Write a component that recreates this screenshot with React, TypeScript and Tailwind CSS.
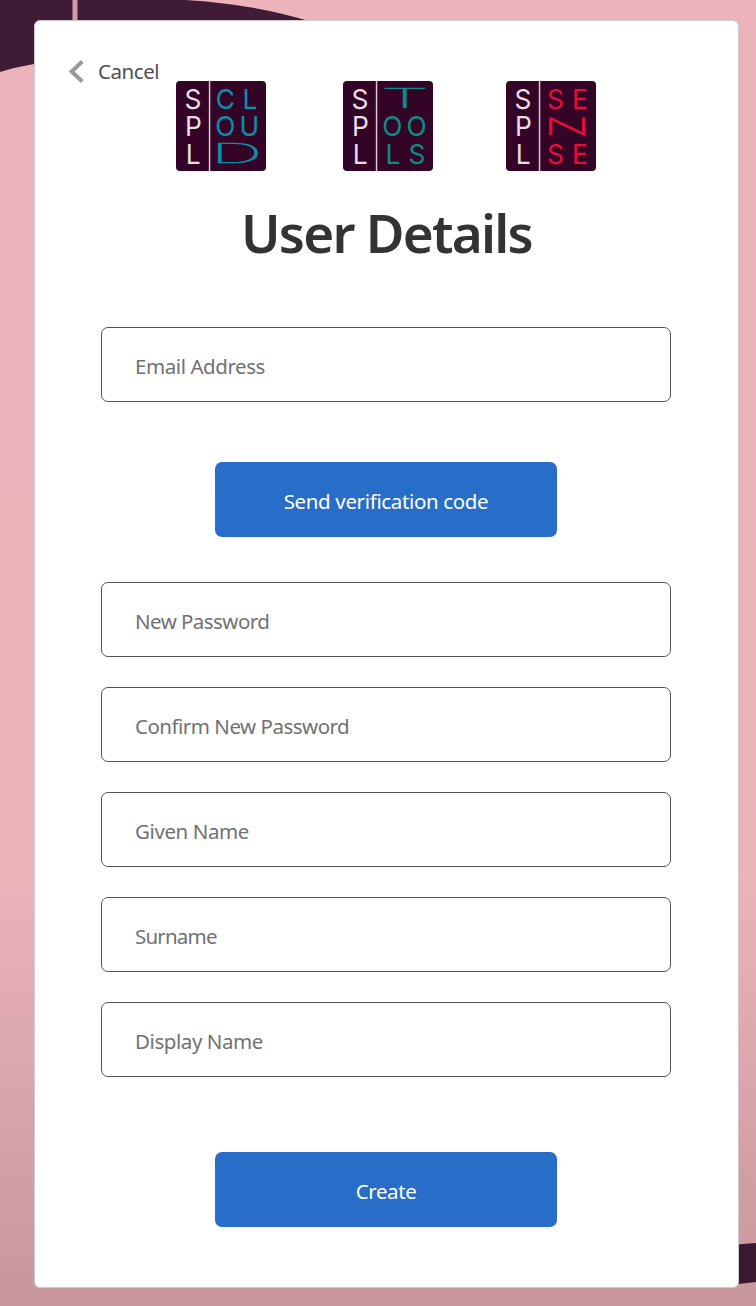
import React from "react";

type Letter = { ch: string; cx: number; y: number; sx?: number; size?: number; wide?: boolean; turned?: boolean };

const SPL: Letter[] = [
  { ch: "S", cx: 17, y: 28.3 },
  { ch: "P", cx: 17.5, y: 55 },
  { ch: "L", cx: 17.3, y: 82.5 },
];

function Letters({ items, fill }: { items: Letter[]; fill: string }) {
  return (
    <g fill={fill} fontFamily="Inter, sans-serif" fontSize="27.5" textAnchor="middle">
      {items.map((l, i) => (
        <text
          key={i}
          transform={`translate(${l.cx} ${l.y}) rotate(${l.turned ? 90 : 0}) scale(${l.sx ?? 0.96} 1)`}
          fontSize={l.size}
          fontWeight={l.wide ? 100 : l.turned ? 300 : 400}
          stroke={l.wide ? fill : undefined}
          strokeWidth={l.wide ? 1.5 : undefined}
          vectorEffect={l.wide ? "non-scaling-stroke" : undefined}
        >
          {l.ch}
        </text>
      ))}
    </g>
  );
}

function Logo({ items, color, label }: { items: Letter[]; color: string; label: string }) {
  return (
    <svg className="h-[90px] w-[90px]" viewBox="0 0 90 90" role="img" aria-label={label}>
      <rect width="90" height="90" rx="4" fill="#330425" />
      <rect x="32.8" width="1.5" height="90" fill="#d8c8d3" />
      <Letters items={SPL} fill="#e9dde6" />
      <Letters items={items} fill={color} />
    </svg>
  );
}

const cloud: Letter[] = [
  { ch: "C", cx: 49.3, y: 28.3 },
  { ch: "L", cx: 74, y: 28.3 },
  { ch: "O", cx: 49.3, y: 55 },
  { ch: "U", cx: 73.2, y: 55 },
  { ch: "D", cx: 60.5, y: 82, sx: 2.7, size: 26.5, wide: true },
];
const tools: Letter[] = [
  { ch: "T", cx: 61.8, y: 27, sx: 2.95, size: 26.5, wide: true },
  { ch: "O", cx: 49.3, y: 55 },
  { ch: "O", cx: 73.7, y: 55 },
  { ch: "L", cx: 50, y: 82.5 },
  { ch: "S", cx: 74, y: 82.5 },
];
const sense: Letter[] = [
  { ch: "S", cx: 49.5, y: 28.3 },
  { ch: "E", cx: 74, y: 28.3 },
  { ch: "Z", cx: 43.3, y: 45.2, sx: 0.74, size: 49, turned: true },
  { ch: "S", cx: 49.5, y: 82.5 },
  { ch: "E", cx: 74, y: 82.5 },
];

function Backdrop() {
  return (
    <svg className="absolute inset-0 h-full w-full" viewBox="0 0 756 1306" aria-hidden="true">
      <defs>
        <linearGradient id="rose" x1="0" y1="0" x2="0" y2="1">
          <stop offset="0" stopColor="#ecb3bb" />
          <stop offset="0.67" stopColor="#ecb3b9" />
          <stop offset="0.82" stopColor="#dba6ad" />
          <stop offset="1" stopColor="#c7969b" />
        </linearGradient>
      </defs>
      <rect width="756" height="1306" fill="url(#rose)" />
      <path d="M0 0H185Q255 4 312 22L34 64Q16 67 0 72Z" fill="#401b35" />
      <rect x="72.5" width="5" height="22" fill="#d49aaa" />
      <path d="M730 1245L756 1243V1282L730 1285Z" fill="#3a1830" />
    </svg>
  );
}

function Field({ label, type = "text", className }: { label: string; type?: string; className: string }) {
  return (
    <input
      type={type}
      placeholder={label}
      aria-label={label}
      className={`h-[75px] w-[570px] rounded-[7px] border border-[#565656] bg-white px-[33px] pt-[3px] text-[20.5px] text-[#333] outline-none placeholder:text-[#717171] placeholder:opacity-100 ${className}`}
    />
  );
}

function Action({ children, className }: { children: React.ReactNode; className: string }) {
  return (
    <button
      className={`h-[75px] w-[342px] rounded-[7px] bg-[#286dc7] pt-[3px] text-[20.5px] text-white ${className}`}
    >
      {children}
    </button>
  );
}

export default function App() {
  return (
    <div className="relative h-[1306px] w-[756px] overflow-hidden pt-5 pl-[34px] font-['Noto_Sans',sans-serif]">
      <Backdrop />
      <main className="relative flex h-[1268px] w-[705px] flex-col items-center rounded-[6px] border border-[#cfcbcc] bg-white">
        <button className="mt-[35px] ml-[34px] flex h-[25px] items-center self-start text-[20.5px] leading-[25px] tracking-[-0.45px] text-[#505050]">
          <svg className="mt-[6px] mr-[14px] h-[23px] w-[15px]" viewBox="0 0 15 23" fill="none">
            <path d="M13.2 1.5L2.7 11.5L13.2 21.5" stroke="#999" strokeWidth="4" />
          </svg>
          <span className="pt-[6px]">Cancel</span>
        </button>
        <div className="flex w-full pl-[141px]">
          <Logo items={cloud} color="#078fae" label="SPL Cloud" />
          <div className="ml-[76.5px]">
            <Logo items={tools} color="#0a8d87" label="SPL Tools" />
          </div>
          <div className="ml-[73px]">
            <Logo items={sense} color="#e80c3b" label="SPL Sense" />
          </div>
        </div>
        <h1 className="mt-[26px] h-[72px] text-[53px] leading-[72px] font-semibold tracking-[-1.75px] text-[#333]">
          User Details
        </h1>
        <form className="mt-[58px] mr-[1px] flex flex-col items-center" onSubmit={(e) => e.preventDefault()}>
          <Field label="Email Address" type="email" className="tracking-[-0.43px]" />
          <Action className="mt-[60px] tracking-[-0.35px]">Send verification code</Action>
          <Field label="New Password" type="password" className="mt-[45px] tracking-[-0.55px]" />
          <Field label="Confirm New Password" type="password" className="mt-[30px] tracking-[-0.5px]" />
          <Field label="Given Name" className="mt-[30px] tracking-[-0.4px]" />
          <Field label="Surname" className="mt-[30px] tracking-[-0.8px]" />
          <Field label="Display Name" className="mt-[30px] tracking-[-0.43px]" />
          <Action className="mt-[75px] tracking-[-0.4px]">Create</Action>
        </form>
      </main>
    </div>
  );
}
